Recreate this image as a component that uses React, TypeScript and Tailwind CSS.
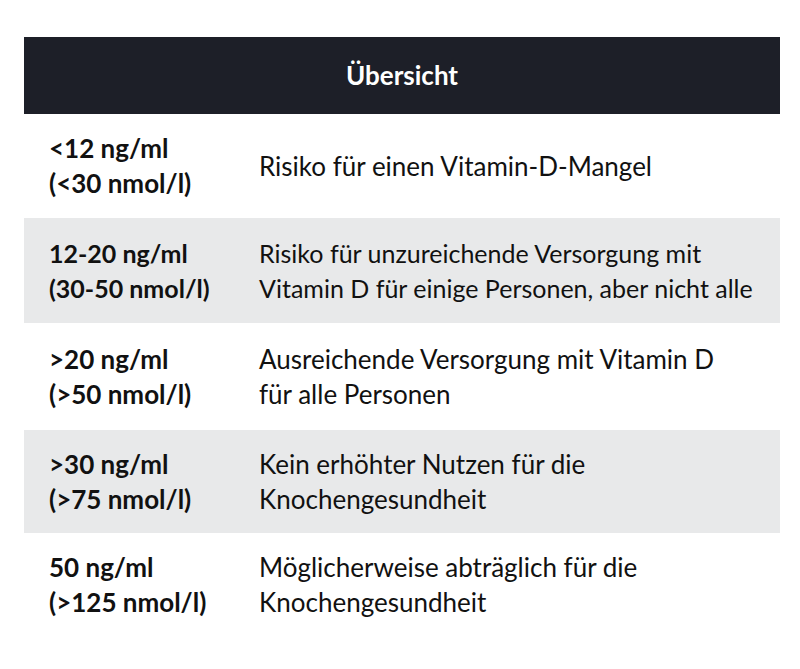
import React from "react";

const rows: { a: string[]; b: string[]; gray: boolean; h: string; fs: string }[] = [
  { a: ["<12 ng/ml", "(<30 nmol/l)"], b: ["Risiko für einen Vitamin-D-Mangel"], gray: false, h: "h-[104px]", fs: "text-[26px]" },
  {
    a: ["12-20 ng/ml", "(30-50 nmol/l)"],
    b: ["Risiko für unzureichende Versorgung mit", "Vitamin D für einige Personen, aber nicht alle"],
    gray: true,
    h: "h-[105px]",
    fs: "text-[25px]",
  },
  {
    a: [">20 ng/ml", "(>50 nmol/l)"],
    b: ["Ausreichende Versorgung mit Vitamin D", "für alle Personen"],
    gray: false,
    h: "h-[107px]",
    fs: "text-[26px]",
  },
  {
    a: [">30 ng/ml", "(>75 nmol/l)"],
    b: ["Kein erhöhter Nutzen für die", "Knochengesundheit"],
    gray: true,
    h: "h-[103px]",
    fs: "text-[26px]",
  },
  {
    a: ["50 ng/ml", "(>125 nmol/l)"],
    b: ["Möglicherweise abträglich für die", "Knochengesundheit"],
    gray: false,
    h: "h-[104px]",
    fs: "text-[26px]",
  },
];

export default function App() {
  return (
    <div
      className="w-[800px] h-[669px] bg-white pt-[37px] px-[24px] text-[#111111]"
      style={{ fontFamily: "Lato, 'Open Sans', sans-serif" }}
    >
      <div className="w-[756px]">
        <div className="h-[77px] bg-[#1d1f28] flex items-center justify-center">
          <span className="text-white font-bold text-[26px]">Übersicht</span>
        </div>
        {rows.map((r, i) => (
          <div
            key={i}
            className={`${r.h} ${r.fs} grid grid-cols-[235px_1fr] items-center leading-[35px] ${
              r.gray ? "bg-[#e8e9ea]" : "bg-white"
            }`}
          >
            <div className="pl-[25px] font-bold">
              {r.a.map((t, j) => (
                <div key={j}>{t}</div>
              ))}
            </div>
            <div>
              {r.b.map((t, j) => (
                <div key={j}>{t}</div>
              ))}
            </div>
          </div>
        ))}
      </div>
    </div>
  );
}
